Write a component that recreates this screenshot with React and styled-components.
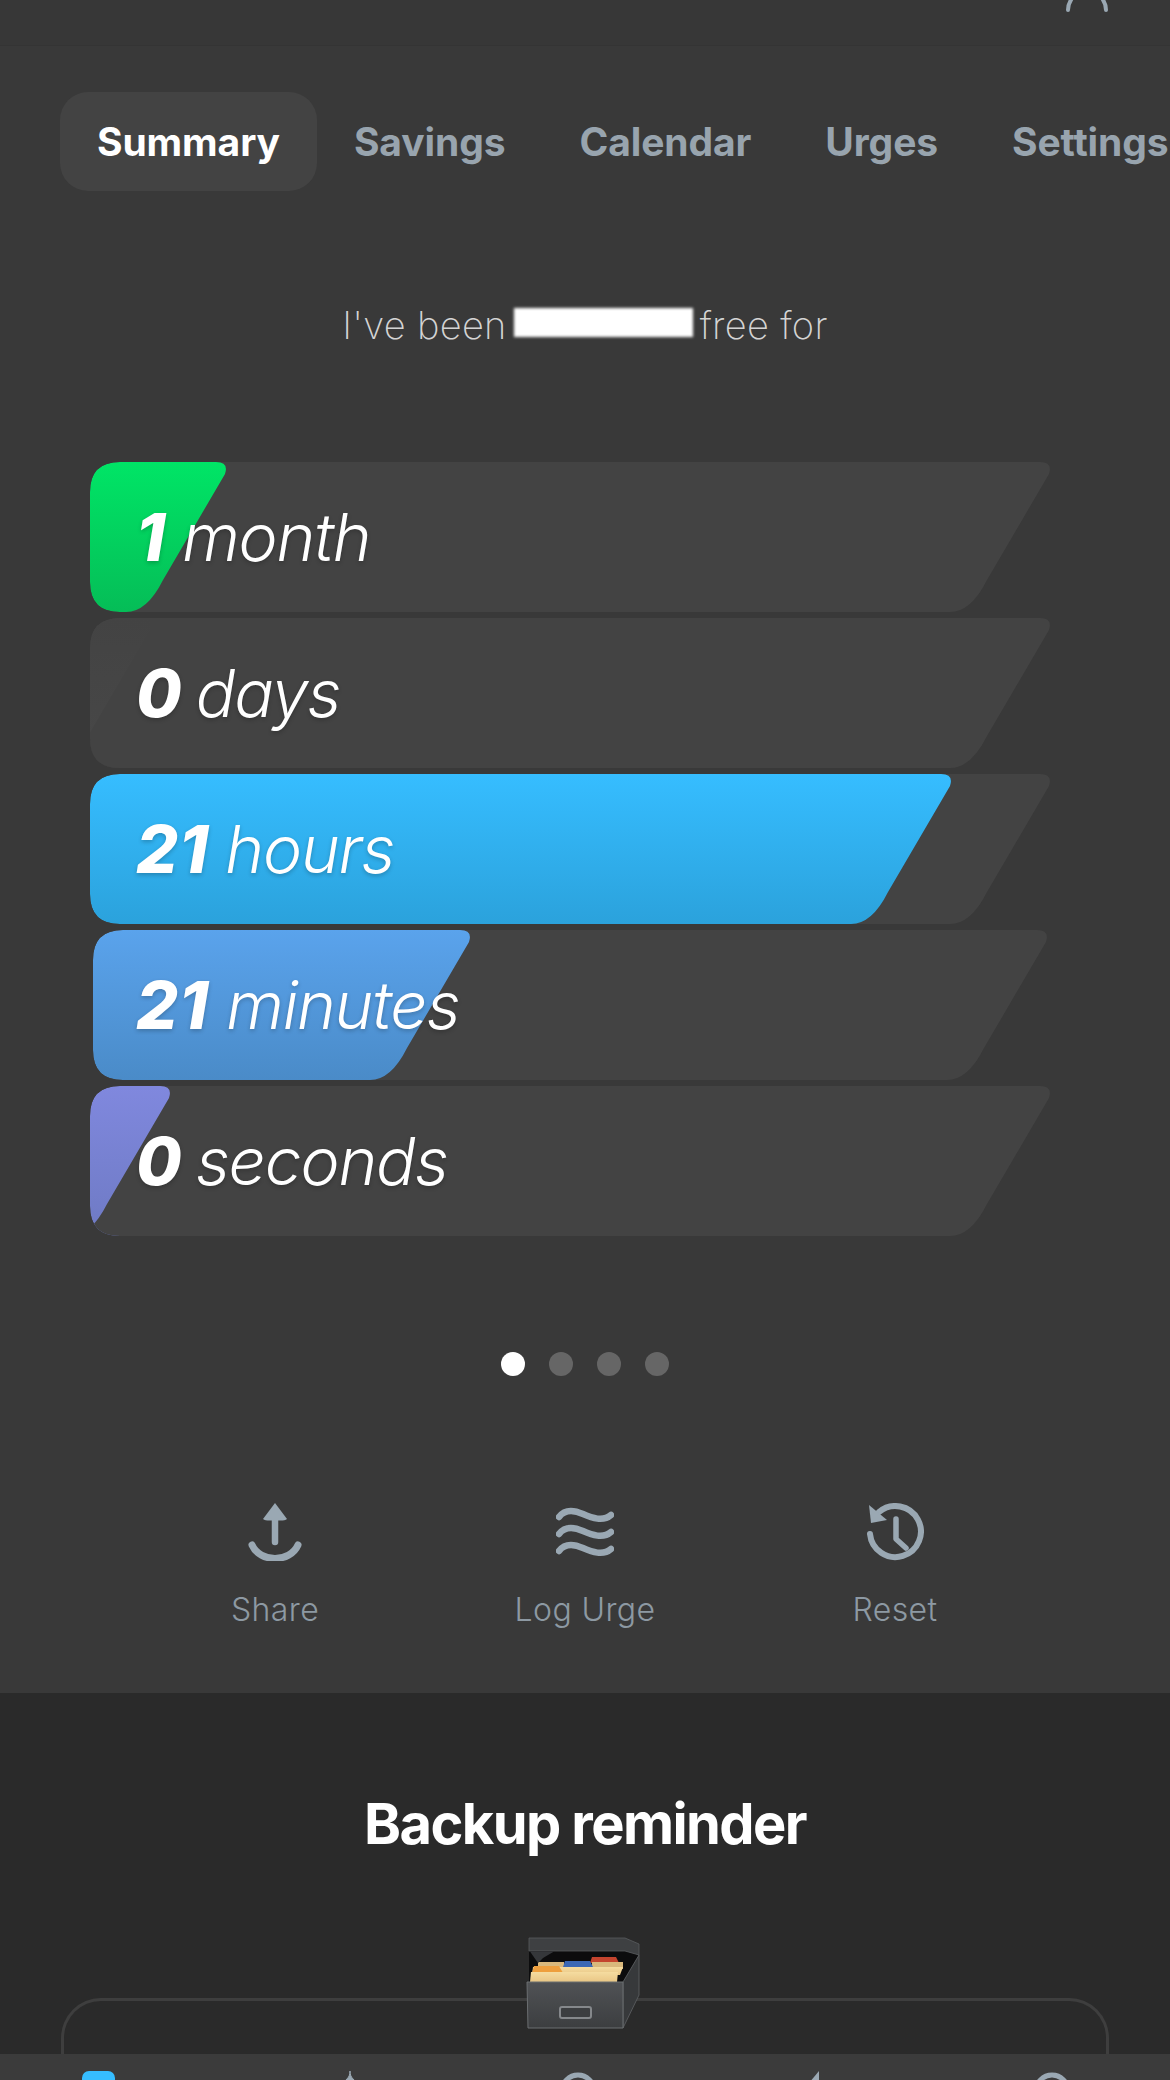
import React from "react";
import styled, { createGlobalStyle } from "styled-components";

const Global = createGlobalStyle`
  html, body { margin: 0; padding: 0; background: #393939; }
  body { font-family: Inter, "Noto Sans", "Liberation Sans", sans-serif; }
`;

const Page = styled.div`
  width: 1170px;
  height: 2080px;
  overflow: hidden;
  display: flex;
  flex-direction: column;
  background: #393939;
`;

const Header = styled.header`
  height: 46px;
  flex: none;
  box-sizing: border-box;
  background: #373737;
  border-bottom: 1px solid #343434;
  display: flex;
  justify-content: flex-end;
  padding-right: 58px;
`;

const Main = styled.main`
  height: 1647px;
  flex: none;
  display: flex;
  flex-direction: column;
`;

const Tabs = styled.nav`
  display: flex;
  align-items: center;
  margin: 46px 0 0 60px;
  height: 99px;
  white-space: nowrap;
`;

const Tab = styled.div`
  height: 99px;
  display: flex;
  align-items: center;
  box-sizing: border-box;
  padding: 0 37px;
  border-radius: 28px;
  font-size: 39px;
  font-weight: 700;
  letter-spacing: -0.1px;
  color: ${(p) => (p.$active ? "#ffffff" : "#98a4ae")};
  background: ${(p) => (p.$active ? "#434343" : "transparent")};
`;

const Lead = styled.div`
  margin-top: 112px;
  height: 44px;
  display: flex;
  justify-content: center;
  align-items: center;
  gap: 7px;
  font-size: 38px;
  font-weight: 250;
  letter-spacing: 0.3px;
  color: #d4d4d4;
`;

const Redaction = styled.span`
  width: 179px;
  height: 29px;
  margin-top: -6px;
  background: #ffffff;
  filter: blur(1.6px);
`;

const Bars = styled.div`
  margin: 115px 0 0 90px;
  display: flex;
  flex-direction: column;
  gap: 6px;
`;

const Bar = styled.div`
  position: relative;
  height: 150px;
  margin-left: ${(p) => p.$inset || 0}px;
  background: #434343;
  display: flex;
  align-items: center;
  padding-left: ${(p) => 46 - (p.$inset || 0)}px;
  box-sizing: border-box;
`;

const Fill = styled.div`
  position: absolute;
  left: 0;
  top: 0;
  bottom: 0;
  background: linear-gradient(${(p) => p.$from}, ${(p) => p.$to});
`;

const BarText = styled.div`
  position: relative;
  font-size: 66px;
  font-style: italic;
  font-weight: 300;
  color: #fff;
  letter-spacing: -1.2px;
  text-shadow: 0 2px 4px rgba(0, 0, 0, 0.22);
  white-space: nowrap;
`;

const BarCount = styled.b`
  font-weight: 800;
  letter-spacing: 1px;
  margin-right: ${(p) => p.$gap}px;
`;

const Dots = styled.div`
  display: flex;
  justify-content: center;
  gap: 24px;
  margin-top: 116px;
`;

const Dot = styled.span`
  width: 24px;
  height: 24px;
  border-radius: 50%;
  background: ${(p) => (p.$on ? "#ffffff" : "#666666")};
`;

const Actions = styled.div`
  display: grid;
  grid-template-columns: repeat(3, 310px);
  justify-content: center;
  margin-top: 127px;
`;

const Action = styled.div`
  display: flex;
  flex-direction: column;
  align-items: center;
  color: #8d99a3;
  font-size: 32px;
  font-weight: 300;
  letter-spacing: 0.4px;
  svg {
    height: 58px;
    margin-bottom: 29px;
    display: block;
  }
`;

const Lower = styled.section`
  position: relative;
  flex: 1;
  background: #2a2a2a;
  min-height: 0;
  display: flex;
  flex-direction: column;
  align-items: center;
  overflow: hidden;
`;

const Title = styled.h2`
  margin: 99px 0 0;
  font-size: 56px;
  line-height: 64px;
  font-weight: 700;
  letter-spacing: -1.6px;
  color: #fff;
`;

const Card = styled.div`
  margin-top: 142px;
  width: 1048px;
  flex: 1;
  box-sizing: border-box;
  border: 3px solid #3e3e3e;
  border-bottom: 0;
  border-radius: 40px 40px 0 0;
`;

const BoxArt = styled.svg`
  position: absolute;
  left: 526px;
  top: 244px;
  width: 116px;
  height: 92px;
`;

const BottomBar = styled.footer`
  height: 26px;
  flex: none;
  overflow: hidden;
  background: #3b3b3b;
  display: grid;
  grid-template-columns: 249px 228px 237px 237px 40px;
  padding: 17px 0 0 81px;
  box-sizing: border-box;
  svg {
    display: block;
    width: 40px;
    height: 40px;
  }
`;

const barPath = (w) =>
  `path("M0 30 Q0 0 30 0 L${w - 10} 0 Q${w + 3} 0 ${w - 1} 12 L${w - 63} 118 Q${w - 79} 150 ${w - 100} 150 L30 150 Q0 150 0 120 Z")`;

const rows = [
  { n: "1", unit: "month", w: 136, gap: 16, from: "#00e566", to: "#05bd57" },
  { n: "0", unit: "days", w: 61, gap: 13, from: "#434343", to: "#484848" },
  { n: "21", unit: "hours", w: 861, gap: 16, from: "#36bdff", to: "#2ba2dc" },
  { n: "21", unit: "minutes", w: 377, gap: 17, from: "#5aa3ec", to: "#4a8bc8", inset: 3, track: 954 },
  { n: "0", unit: "seconds", w: 80, gap: 13, from: "#8088de", to: "#6e7ac4" },
];

const iconColor = "#9aa8b3";

const ShareIcon = () => (
  <svg viewBox="0 0 58 58" width="58" height="58" fill="none" stroke={iconColor} strokeWidth="6.5" strokeLinecap="round">
    <path d="M29 10V39" />
    <path d="M29 0L41 16C39 18 35 17.5 29 17.5C23 17.5 19 18 17 16Z" fill={iconColor} stroke="none" />
    <path d="M6 42C14 60 44 60 52 42" strokeWidth="7" />
  </svg>
);

const WavesIcon = () => (
  <svg viewBox="0 0 58 58" width="58" height="58" fill="none" stroke={iconColor} strokeWidth="6.5" strokeLinecap="round">
    <path d="M3 14C9 6 18 7 27 11S47 19 55 12" />
    <path d="M3 31C9 23 18 24 27 28S47 36 55 29" />
    <path d="M3 48C9 40 18 41 27 45S47 53 55 46" />
  </svg>
);

const ResetIcon = () => (
  <svg viewBox="0 0 58 58" width="58" height="58" fill="none" stroke={iconColor} strokeWidth="6" strokeLinecap="round" strokeLinejoin="round">
    <path d="M13 9A25.5 25.5 0 1 1 4 31" />
    <path d="M3 2L21 17L5 20Z" fill={iconColor} stroke="none" />
    <path d="M30 16V36L40 45" strokeWidth="5.5" />
  </svg>
);

const FileBox = () => (
  <BoxArt viewBox="0 0 116 92">
    <defs>
      <linearGradient id="boxFront" x1="0" y1="0" x2="0" y2="1">
        <stop offset="0" stopColor="#505255" />
        <stop offset="1" stopColor="#3c3e40" />
      </linearGradient>
      <linearGradient id="paper" x1="0" y1="0" x2="0" y2="1">
        <stop offset="0" stopColor="#f5dca0" />
        <stop offset="1" stopColor="#e9c685" />
      </linearGradient>
    </defs>
    <path d="M3 14H99L113 18L97 45H3Z" fill="#0c0c0d" />
    <path d="M64 26L66 20H90L93 26Z" fill="#c4442e" />
    <path d="M12 25H38V29H66V25H97V32H12Z" fill="#d9b87c" />
    <path d="M37 30L39 24H64L67 30Z" fill="#3b68b5" />
    <path d="M7 30H97L94 38H6Z" fill="url(#paper)" />
    <path d="M6 36L8 29H33L37 36Z" fill="#ee9f3d" />
    <path d="M5 35H92L91 45H4Z" fill="url(#paper)" />
    <path d="M97 45L113 18V58L97 91Z" fill="#37393b" stroke="#5f6265" strokeWidth="0.8" />
    <path d="M1 45H97V91H2Z" fill="url(#boxFront)" stroke="#6b6e71" strokeWidth="1" />
    <rect x="34" y="70" width="31" height="11" rx="2" fill="#3c3e40" stroke="#85888b" strokeWidth="2" />
    <path d="M3 1H99L113 7V18L99 14H3Z" fill="#3e4042" stroke="#595c5e" strokeWidth="0.8" />
    <path d="M4 14.5H28L17 21L12 26Z" fill="#35373a" />
  </BoxArt>
);

const BottomIcon = ({ children }) => <svg viewBox="0 0 40 40" fill="none" stroke="#9aa8b3" strokeWidth="5">{children}</svg>;

export default function App() {
  return (
    <Page>
      <Global />
      <Header>
        <svg width="50" height="12" viewBox="0 0 50 12" fill="none" stroke="#9aa8b3" strokeWidth="4" strokeLinecap="round">
          <path d="M6 10C6 6 7 3 9 0" />
          <path d="M44 10C44 6 43 3 41 0" />
        </svg>
      </Header>
      <Main>
        <Tabs>
          <Tab $active>Summary</Tab>
          <Tab>Savings</Tab>
          <Tab>Calendar</Tab>
          <Tab>Urges</Tab>
          <Tab>Settings</Tab>
        </Tabs>
        <Lead>
          <span>I've been</span>
          <Redaction />
          <span>free for</span>
        </Lead>
        <Bars>
          {rows.map((r) => {
            const track = r.track || 960;
            return (
              <Bar key={r.unit} $inset={r.inset} style={{ width: track, clipPath: barPath(track) }}>
                <Fill $from={r.from} $to={r.to} style={{ width: r.w + 4, clipPath: barPath(r.w) }} />
                <BarText>
                  <BarCount $gap={r.gap}>{r.n}</BarCount>
                  {r.unit}
                </BarText>
              </Bar>
            );
          })}
        </Bars>
        <Dots>
          <Dot $on />
          <Dot />
          <Dot />
          <Dot />
        </Dots>
        <Actions>
          <Action>
            <ShareIcon />
            Share
          </Action>
          <Action>
            <WavesIcon />
            Log Urge
          </Action>
          <Action>
            <ResetIcon />
            Reset
          </Action>
        </Actions>
      </Main>
      <Lower>
        <Title>Backup reminder</Title>
        <Card />
        <FileBox />
      </Lower>
      <BottomBar>
        <svg viewBox="0 0 40 40"><rect x="1" y="0" width="33" height="40" rx="7" fill="#36bdff" /></svg>
        <BottomIcon><path d="M20 0C20 4 21 6 24 9H16C19 6 20 4 20 0Z" fill="#9aa8b3" strokeWidth="1" /></BottomIcon>
        <BottomIcon><circle cx="20" cy="20" r="16" /></BottomIcon>
        <BottomIcon><path d="M24 0L14 12H24Z" fill="#9aa8b3" stroke="none" /></BottomIcon>
        <BottomIcon><circle cx="20" cy="20" r="16" /></BottomIcon>
      </BottomBar>
    </Page>
  );
}
